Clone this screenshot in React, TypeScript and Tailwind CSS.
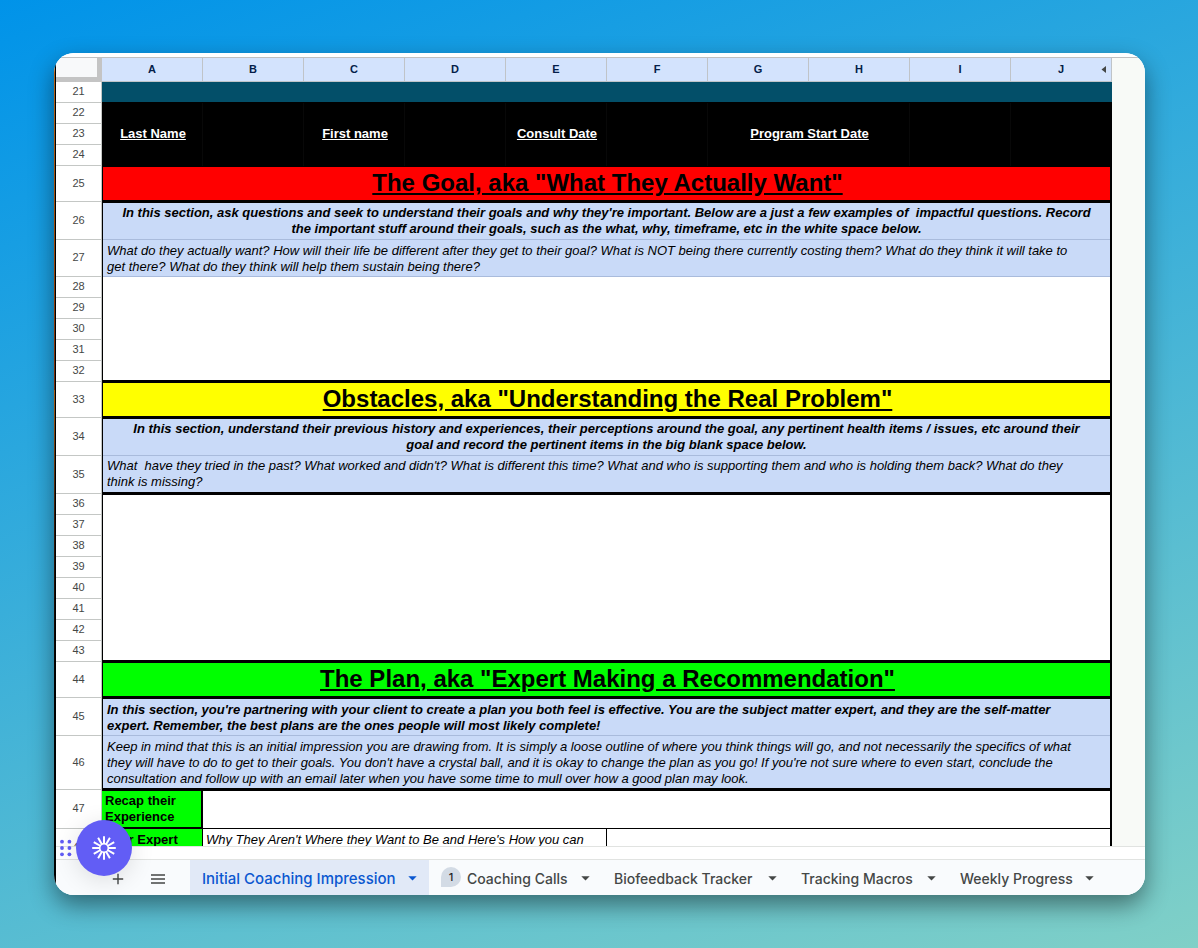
import React from "react";

const COLUMNS = ["A", "B", "C", "D", "E", "F", "G", "H", "I", "J"];
const RAYS = [0, 30, 60, 90, 120, 150, 180, 210, 240, 270, 300, 330];

function RowNumber({ n }: { n: number }) {
  return (
    <th
      scope="row"
      className="border-r border-b border-[#c4c7c5] bg-white p-0 pb-[2px] text-center align-middle text-[11px] leading-4 font-normal text-[#444746]"
    >
      {n}
    </th>
  );
}

function Gutter() {
  return <td className="bg-[#f8faf7] p-0" />;
}

function NameRow({ n, labels }: { n: number; labels?: boolean }) {
  const label =
    "border-r border-[#080808] bg-black p-0 pb-[2px] pl-[2px] text-center text-[13px] leading-4 font-bold text-white underline";
  return (
    <tr className="h-[21px]">
      <RowNumber n={n} />
      <td className={label}>{labels && "Last Name"}</td>
      <td className={label} />
      <td className={label}>{labels && "First name"}</td>
      <td className={label} />
      <td className={label}>{labels && "Consult Date"}</td>
      <td className={label} />
      <td colSpan={2} className={label}>
        {labels && "Program Start Date"}
      </td>
      <td className={label} />
      <td className="bg-black p-0" />
      <Gutter />
    </tr>
  );
}

function HeadingRow({ n, color, children }: { n: number; color: string; children: React.ReactNode }) {
  return (
    <tr className="h-[36px]">
      <RowNumber n={n} />
      <td
        colSpan={10}
        className={`border-t border-r-2 border-b-2 border-l border-black p-0 pb-[2px] pl-[2px] text-center align-middle text-[24px] leading-7 font-bold text-black underline ${color}`}
      >
        {children}
      </td>
      <Gutter />
    </tr>
  );
}

function NoteRow({
  n,
  row,
  cell,
  children,
}: {
  n: number;
  row: string;
  cell: string;
  children: React.ReactNode;
}) {
  return (
    <tr className={row}>
      <RowNumber n={n} />
      <td
        colSpan={10}
        className={`border-r-2 border-l border-black bg-[#c9daf8] px-1 py-0 align-top text-[13px] leading-4 whitespace-pre-wrap text-black italic ${cell}`}
      >
        {children}
      </td>
      <Gutter />
    </tr>
  );
}

function BlankRows({ from, count, top }: { from: number; count: number; top?: boolean }) {
  return (
    <>
      {Array.from({ length: count }, (_, i) => (
        <tr key={i} className="h-[21px]">
          <RowNumber n={from + i} />
          <td
            colSpan={10}
            className={`border-r-2 border-l border-black bg-white p-0 ${top && i === 0 ? "border-t" : ""} ${
              i === count - 1 ? "border-b-2" : ""
            }`}
          />
          <Gutter />
        </tr>
      ))}
    </>
  );
}

function Caret() {
  return (
    <svg width="9" height="5" viewBox="0 0 9 5" fill="currentColor" aria-hidden="true">
      <path d="M0.3 0.3h8.4L4.5 4.6z" />
    </svg>
  );
}

function SheetTab({
  label,
  width,
  active,
  badge,
}: {
  label: string;
  width: string;
  active?: boolean;
  badge?: string;
}) {
  return (
    <button
      type="button"
      className={`flex h-full shrink-0 items-center justify-between px-3 pt-[2px] leading-5 font-medium whitespace-nowrap ${width} ${
        active ? "bg-[#e1e9f7] text-[15px] text-[#0b57d0]" : "text-[14px] text-[#444746]"
      }`}
    >
      <span className="flex items-center gap-[6px]">
        {badge && (
          <span className="-mt-1 flex size-5 items-center justify-center rounded-full rounded-bl-none bg-[#d3dbe5] text-[11px] text-[#1f1f1f]">
            {badge}
          </span>
        )}
        {label}
      </span>
      <Caret />
    </button>
  );
}

export default function App() {
  return (
    <div className="min-h-screen bg-[linear-gradient(160deg,#0093E9_0%,#80D0C7_100%)] px-[54px] py-[53px] pr-[53px] font-['Liberation_Sans',Arial,sans-serif]">
      <main className="relative rounded-[20px] shadow-[0_10px_24px_rgba(0,0,0,0.45)]">
        <div className="flex overflow-hidden rounded-[20px] bg-white">
          <div className="w-px shrink-0 bg-[linear-gradient(180deg,#b5651d_0%,#a04a08_20%,#7a2c0a_40%,#a85c14_40%,#3a1a08_55%,#000_75%)]" />
          <div className="w-px shrink-0 bg-black" />
          <div className="min-w-0 grow">
            <div className="h-1 bg-white" />
            <table className="w-full table-fixed border-separate border-spacing-0 border-t border-[#c0c0c0]">
              <colgroup>
                <col className="w-[46px]" />
                {COLUMNS.map((c) => (
                  <col key={c} />
                ))}
                <col className="w-[33px]" />
              </colgroup>
              <thead>
                <tr className="h-[24px]">
                  <td className="border-r-[5px] border-b-[5px] border-[#c4c4c4] bg-[#f8f9fa] p-0" />
                  {COLUMNS.map((c) => (
                    <th
                      key={c}
                      scope="col"
                      className="border-r border-b border-[#c0c4c8] bg-[#d3e3fd] p-0 pb-[2px] text-center text-[11px] leading-4 font-bold text-[#041e49]"
                    >
                      {c === "J" ? (
                        <span className="relative block">
                          {c}
                          <svg
                            className="absolute top-[5px] right-[5px]"
                            width="5"
                            height="7"
                            viewBox="0 0 5 7"
                            fill="#444746"
                            aria-hidden="true"
                          >
                            <path d="M5 0v7L0.5 3.5z" />
                          </svg>
                        </span>
                      ) : (
                        c
                      )}
                    </th>
                  ))}
                  <Gutter />
                </tr>
              </thead>
              <tbody>
                <tr className="h-[21px]">
                  <RowNumber n={21} />
                  <td colSpan={10} className="border-b border-black bg-[#034f69] p-0" />
                  <Gutter />
                </tr>
                <NameRow n={22} />
                <NameRow n={23} labels />
                <NameRow n={24} />
                <HeadingRow n={25} color="bg-[#ff0000]">
                  The Goal, aka "What They Actually Want"
                </HeadingRow>
                <NoteRow
                  n={26}
                  row="h-[38px]"
                  cell="border-t pt-[2px] text-center font-bold shadow-[inset_0_-1px_0_#a9bbdc]"
                >
                  {
                    "In this section, ask questions and seek to understand their goals and why they're important. Below are a just a few examples of  impactful questions. Record"
                  }
                  <br />
                  the important stuff around their goals, such as the what, why, timeframe, etc in the white space below.
                </NoteRow>
                <NoteRow n={27} row="h-[37px]" cell="pt-[3px] shadow-[inset_0_-1px_0_#a9bbdc]">
                  What do they actually want? How will their life be different after they get to their goal? What is NOT
                  being there currently costing them? What do they think it will take to
                  <br />
                  get there? What do they think will help them sustain being there?
                </NoteRow>
                <BlankRows from={28} count={5} />
                <HeadingRow n={33} color="bg-[#ffff00]">
                  Obstacles, aka "Understanding the Real Problem"
                </HeadingRow>
                <NoteRow
                  n={34}
                  row="h-[38px]"
                  cell="border-t pt-[2px] text-center font-bold shadow-[inset_0_-1px_0_#a9bbdc]"
                >
                  In this section, understand their previous history and experiences, their perceptions around the goal,
                  any pertinent health items / issues, etc around their
                  <br />
                  goal and record the pertinent items in the big blank space below.
                </NoteRow>
                <NoteRow n={35} row="h-[38px]" cell="border-b-2 pt-[2px]">
                  {
                    "What  have they tried in the past? What worked and didn't? What is different this time? What and who is supporting them and who is holding them back? What do they"
                  }
                  <br />
                  think is missing?
                </NoteRow>
                <BlankRows from={36} count={8} top />
                <HeadingRow n={44} color="bg-[#00ff00]">
                  The Plan, aka "Expert Making a Recommendation"
                </HeadingRow>
                <NoteRow n={45} row="h-[38px]" cell="border-t pt-[3px] font-bold shadow-[inset_0_-1px_0_#a9bbdc]">
                  In this section, you're partnering with your client to create a plan you both feel is effective. You
                  are the subject matter expert, and they are the self-matter
                  <br />
                  expert. Remember, the best plans are the ones people will most likely complete!
                </NoteRow>
                <NoteRow n={46} row="h-[54px]" cell="border-b-2 pt-[3px]">
                  Keep in mind that this is an initial impression you are drawing from. It is simply a loose outline of
                  where you think things will go, and not necessarily the specifics of what
                  <br />
                  they will have to do to get to their goals. You don't have a crystal ball, and it is okay to change the
                  plan as you go! If you're not sure where to even start, conclude the
                  <br />
                  consultation and follow up with an email later when you have some time to mull over how a good plan may
                  look.
                </NoteRow>
                <tr className="h-[39px]">
                  <RowNumber n={47} />
                  <td className="border-t border-r-2 border-b-2 border-black bg-[#00ff00] p-0 pt-[2px] pl-[3px] align-top text-[13px] leading-4 font-bold text-black">
                    Recap their Experience
                  </td>
                  <td colSpan={9} className="border-t border-r-2 border-b border-black bg-white p-0" />
                  <Gutter />
                </tr>
                <tr className="h-[17px]">
                  <th
                    scope="row"
                    className="border-r border-[#c4c7c5] bg-white p-0 text-center align-top text-[11px] leading-4 font-normal text-[#444746]"
                  >
                    <div className="h-[17px] overflow-hidden pt-[10px]">48</div>
                  </th>
                  <td className="border-r border-black bg-[#00ff00] p-0 align-top text-[13px] leading-4 font-bold text-black">
                    <div className="h-[17px] overflow-hidden pt-[3px] pl-[3px]">Your Expert</div>
                  </td>
                  <td
                    colSpan={4}
                    className="border-r border-black bg-white p-0 align-top text-[13px] leading-4 text-black italic"
                  >
                    <div className="h-[17px] overflow-hidden pt-[3px] pl-[3px]">
                      Why They Aren't Where they Want to Be and Here's How you can
                    </div>
                  </td>
                  <td colSpan={5} className="border-r-2 border-black bg-white p-0" />
                  <Gutter />
                </tr>
              </tbody>
            </table>
            <div className="h-[13px] border-t border-[#e1e3e1] bg-white" />
            <nav
              aria-label="Sheets"
              className="flex h-[36px] overflow-hidden border-t border-[#e1e3e1] bg-[#f9fbfd] pl-[42px] font-[Inter,sans-serif]"
            >
              <button
                type="button"
                aria-label="Add sheet"
                className="flex w-10 shrink-0 items-center justify-center pt-[2px] text-[#444746]"
              >
                <svg width="12" height="12" viewBox="0 0 12 12" fill="none" stroke="currentColor" strokeWidth="1.4">
                  <path d="M6 0.8v10.4M0.8 6h10.4" />
                </svg>
              </button>
              <button
                type="button"
                aria-label="All sheets"
                className="mr-3 flex w-10 shrink-0 items-center justify-center pt-[2px] text-[#444746]"
              >
                <svg width="14" height="10" viewBox="0 0 14 10" fill="none" stroke="currentColor" strokeWidth="1.5">
                  <path d="M0 1h14M0 5h14M0 9h14" />
                </svg>
              </button>
              <SheetTab label="Initial Coaching Impression" width="min-w-[239px]" active />
              <SheetTab label="Coaching Calls" width="min-w-[173px]" badge="1" />
              <SheetTab label="Biofeedback Tracker" width="min-w-[187px]" />
              <SheetTab label="Tracking Macros" width="min-w-[159px]" />
              <SheetTab label="Weekly Progress" width="min-w-[158px]" />
            </nav>
          </div>
        </div>
        <div className="absolute bottom-[19px] left-[6px] flex items-center gap-1">
          <svg width="12" height="18" viewBox="0 0 12 18" fill="#625df5" aria-hidden="true">
            <circle cx="2" cy="2.7" r="1.9" />
            <circle cx="9.4" cy="2.7" r="1.9" />
            <circle cx="2" cy="9" r="1.9" />
            <circle cx="9.4" cy="9" r="1.9" />
            <circle cx="2" cy="15.3" r="1.9" />
            <circle cx="9.4" cy="15.3" r="1.9" />
          </svg>
          <button
            type="button"
            aria-label="Record"
            className="flex size-14 items-center justify-center rounded-full bg-[#625df5] text-white shadow-[0_4px_24px_rgba(0,0,0,0.12)]"
          >
            <svg width="24" height="24" viewBox="0 0 24 24" fill="none" stroke="currentColor" aria-hidden="true">
              <circle cx="12" cy="12" r="4.3" strokeWidth="1.6" />
              {RAYS.map((a) => (
                <path key={a} d="M12 8V0.2" strokeWidth="2" transform={`rotate(${a} 12 12)`} />
              ))}
            </svg>
          </button>
        </div>
      </main>
    </div>
  );
}
